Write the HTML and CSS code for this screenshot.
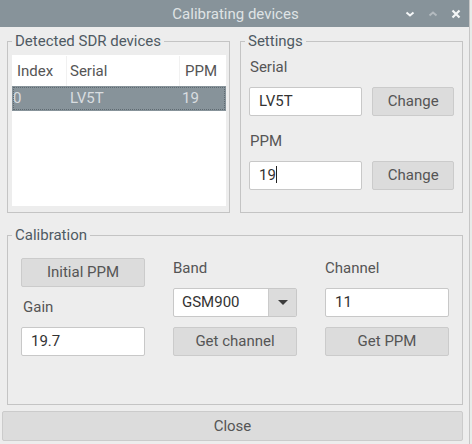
FILE: index.html
```html
<!DOCTYPE html>
<html>
<head>
<meta charset="utf-8">
<link rel="stylesheet" href="styles.css">
</head>
<body>
<div class="window">
  <div class="titlebar">
    <span class="title">Calibrating devices</span>
    <div class="controls">
      <svg class="ctl" width="10" height="10" viewBox="0 0 10 10"><path d="M1.5 3.5 L5 6.5 L8.5 3.5" fill="none" stroke="#f4f6f7" stroke-width="2"/></svg>
      <svg class="ctl dim" width="10" height="10" viewBox="0 0 10 10"><path d="M1.5 6.5 L5 3.5 L8.5 6.5" fill="none" stroke="#b3babf" stroke-width="2"/></svg>
      <svg class="ctl" width="10" height="10" viewBox="0 0 10 10"><path d="M1.5 1.5 L8.5 8.5 M8.5 1.5 L1.5 8.5" fill="none" stroke="#f4f6f7" stroke-width="2.2"/></svg>
    </div>
  </div>
  <div class="content">
    <div class="toprow">
      <fieldset class="group devices">
        <legend>Detected SDR devices</legend>
        <div class="table">
          <div class="thead">
            <div class="c1">Index</div>
            <div class="c2">Serial</div>
            <div class="c3">PPM</div>
          </div>
          <div class="trow selected">
            <div class="c1">0</div>
            <div class="c2">LV5T</div>
            <div class="c3">19</div>
          </div>
        </div>
      </fieldset>
      <fieldset class="group settings">
        <legend>Settings</legend>
        <div class="label">Serial</div>
        <div class="line">
          <div class="input">LV5T</div>
          <div class="button">Change</div>
        </div>
        <div class="label">PPM</div>
        <div class="line">
          <div class="input">19<span class="caret"></span></div>
          <div class="button">Change</div>
        </div>
      </fieldset>
    </div>
    <fieldset class="group calib">
      <legend>Calibration</legend>
      <div class="cols">
        <div class="col">
          <div class="button">Initial PPM</div>
          <div class="label tall">Gain</div>
          <div class="input">19.7</div>
        </div>
        <div class="col">
          <div class="label short">Band</div>
          <div class="combo"><span class="ctext">GSM900</span><span class="arrow"><svg width="10" height="6" viewBox="0 0 10 6"><path d="M0 0 L10 0 L5 5 Z" fill="#3c3c3c"/></svg></span></div>
          <div class="button mt">Get channel</div>
        </div>
        <div class="col">
          <div class="label short">Channel</div>
          <div class="input">11</div>
          <div class="button mt">Get PPM</div>
        </div>
      </div>
    </fieldset>
    <div class="button close">Close</div>
  </div>
</div>
</body>
</html>
```
FILE: styles.css
```css
* { box-sizing: border-box; }
html, body { margin: 0; padding: 0; }
body {
  background: #e8ece9;
  font-family: Roboto, "Liberation Sans", sans-serif;
  font-size: 15px;
  color: #555;
  width: 472px;
  height: 444px;
  overflow: hidden;
}
.window {
  width: 470px;
  height: 444px;
  background: #ededed;
  border-right: 1px solid #c6c6c6;
  display: flex;
  flex-direction: column;
}
.titlebar {
  height: 27px;
  background: #87939a;
  display: flex;
  align-items: center;
  justify-content: center;
  position: relative;
}
.title {
  color: #dfe3e5;
  font-size: 15px;
  margin-left: 2px;
}
.controls {
  position: absolute;
  right: 8px;
  top: 9px;
  display: flex;
  gap: 13px;
}
.ctl { display: block; }
.content {
  flex: 1;
  display: flex;
  flex-direction: column;
  padding: 5px 6px 3px 2px;
}
.toprow {
  display: flex;
  gap: 10px;
  padding-left: 5px;
}
fieldset.group {
  margin: 0;
  border: 1px solid #c4c4c4;
  min-width: 0;
}
legend {
  padding: 0 3px;
  line-height: 18px;
  color: #4f5a63;
}
fieldset.devices {
  width: 224px;
  height: 181px;
  padding: 5px 3px 6px 4px;
}
.devices legend { margin-left: 0; }
.table {
  background: #fff;
  height: 151px;
  padding-top: 1px;
}
.thead, .trow {
  display: flex;
}
.thead { height: 30px; color: #555; }
.thead > div { height: 30px; line-height: 30px; border-right: 1px solid #f1f1f1; }
.thead > div:last-child { border-right: none; }
.c1 { width: 55px; padding-left: 5px; }
.c2 { width: 113px; padding-left: 3px; }
.c3 { width: 46px; padding-left: 5px; }
.trow.selected {
  height: 25px;
  background: #87939a;
  color: #d9dde0;
  outline: 1px dotted #5f6a71;
  outline-offset: -2px;
  line-height: 25px;
}
.trow .c1 { padding-left: 1px; }
.trow .c2 { padding-left: 3px; }
.trow .c3 { padding-left: 2px; }
fieldset.settings {
  width: 224px;
  height: 181px;
  padding: 7px 8px 0 8px;
}
.settings legend { margin-left: -4px; }
.label { color: #555; line-height: 20px; }
.settings .label { height: 20px; padding-left: 1px; }
.settings .line { display: flex; gap: 10px; margin-top: 10px; margin-bottom: 15px; }
.settings .line:last-child { margin-bottom: 0; }
.input {
  background: #fff;
  border: 1px solid #c8c8c8;
  border-radius: 2px;
  height: 29px;
  line-height: 27px;
  padding-left: 9px;
  color: #333;
}
.settings .input { width: 114px; }
.caret {
  display: inline-block;
  width: 1px;
  height: 17px;
  background: #222;
  vertical-align: -3px;
}
.button {
  background: #dcdcdc;
  border: 1px solid #cbcbcb;
  border-radius: 2px;
  height: 29px;
  line-height: 27px;
  text-align: center;
  color: #555;
}
.settings .button { width: 82px; }
fieldset.calib {
  margin: 13px 0 0 5px;
  height: 179px;
  padding: 14px 13px 0 13px;
}
.calib legend { margin-left: -9px; }
.cols {
  display: flex;
  gap: 28px;
}
.col {
  width: 124px;
  display: flex;
  flex-direction: column;
}
.label.tall { height: 40px; line-height: 40px; padding-left: 2px; }
.label.short { height: 30px; line-height: 20px; }
.combo {
  display: flex;
  height: 29px;
  border: 1px solid #c8c8c8;
  border-radius: 2px;
  background: #fff;
  color: #333;
}
.ctext { flex: 1; padding-left: 8px; line-height: 27px; }
.arrow {
  width: 28px;
  background: #dcdcdc;
  border-left: 1px solid #cbcbcb;
  display: flex;
  align-items: center;
  justify-content: center;
}
.mt { margin-top: 10px; }
.close {
  margin-top: 6px;
  height: 30px;
  line-height: 28px;
}
```
